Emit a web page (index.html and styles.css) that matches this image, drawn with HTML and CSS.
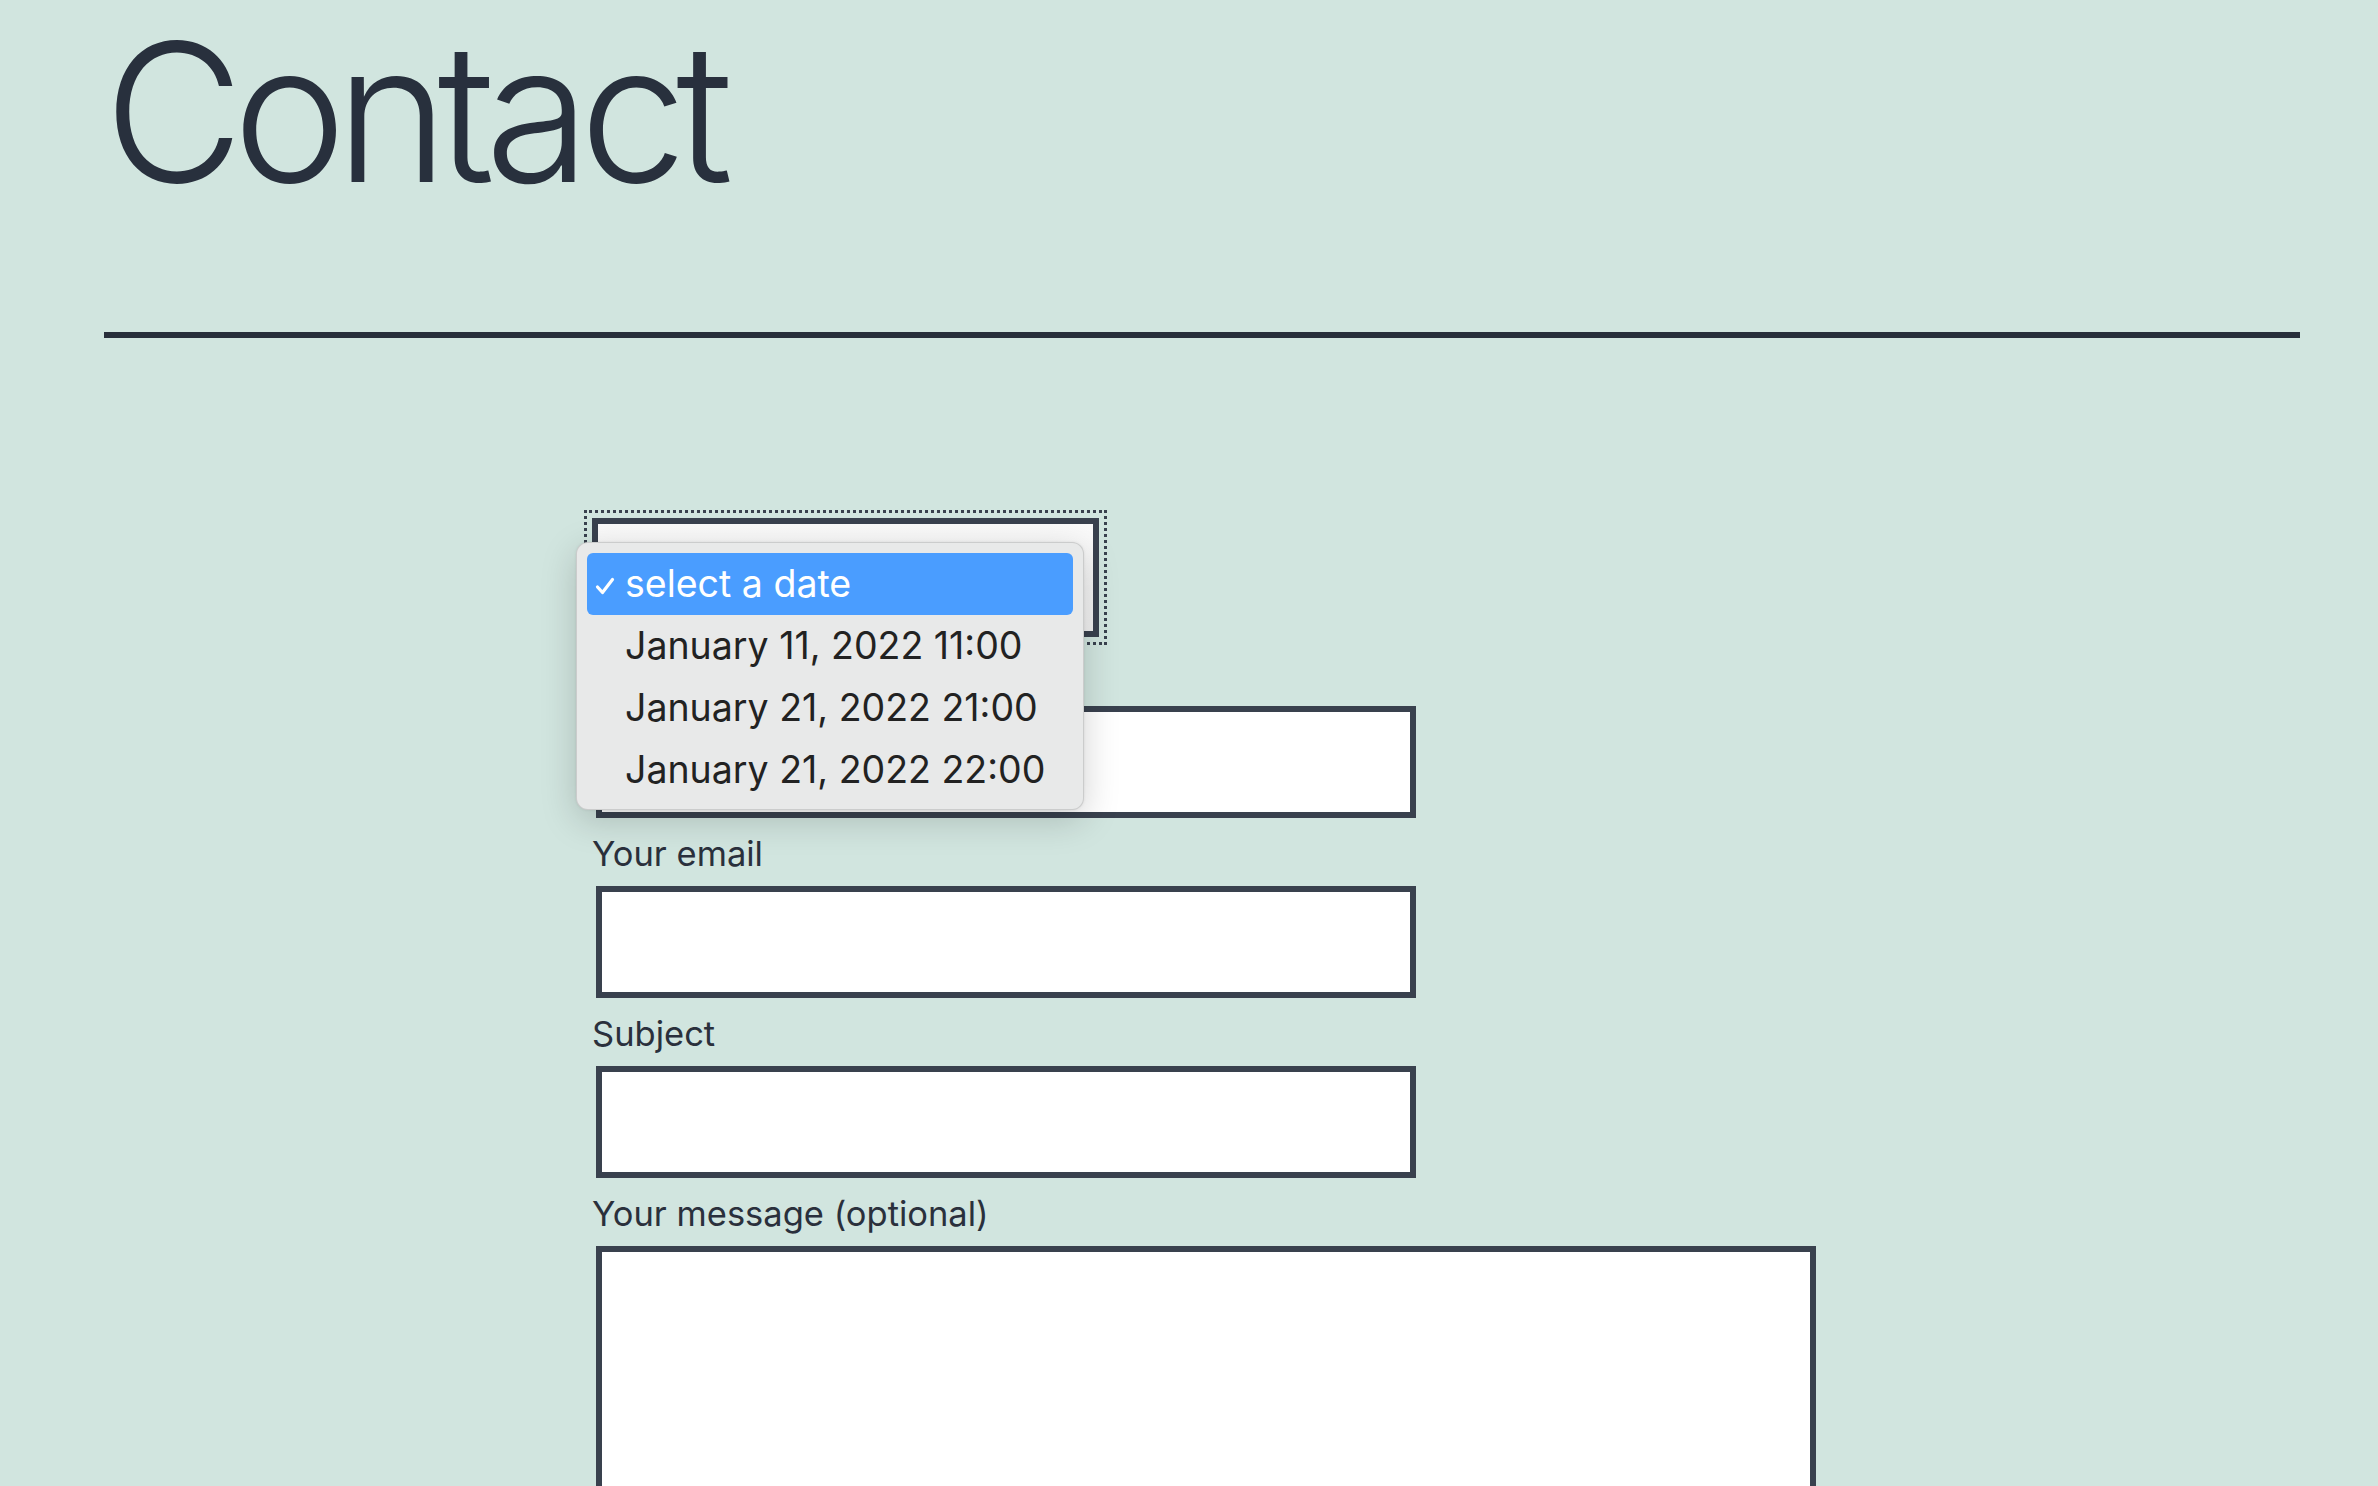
FILE: index.html
```html
<!DOCTYPE html>
<html lang="en">
<head>
<meta charset="utf-8">
<title>Contact</title>
<link rel="stylesheet" href="styles.css">
</head>
<body>
<main class="page">
  <h1 class="title">Contact</h1>
  <hr class="rule">
  <form class="form">
    <div class="select-wrap">
      <select class="date-select">
        <option>select a date</option>
        <option>January 11, 2022 11:00</option>
        <option>January 21, 2022 21:00</option>
        <option>January 21, 2022 22:00</option>
      </select>
      <ul class="menu">
        <li class="menu-item is-active"><svg class="check" viewBox="0 0 20 18" width="20" height="18"><path d="M2.5 10 L7.5 15.5 L17.5 2.5" fill="none" stroke="#fff" stroke-width="3.2" stroke-linecap="round" stroke-linejoin="round"/></svg>select a date</li>
        <li class="menu-item">January 11, 2022 11:00</li>
        <li class="menu-item">January 21, 2022 21:00</li>
        <li class="menu-item">January 21, 2022 22:00</li>
      </ul>
    </div>
    <label class="field-label">Your name</label>
    <input class="field" type="text">
    <label class="field-label">Your email</label>
    <input class="field" type="email">
    <label class="field-label">Subject</label>
    <input class="field" type="text">
    <label class="field-label">Your message (optional)</label>
    <textarea class="field field-area"></textarea>
  </form>
</main>
</body>
</html>
```
FILE: styles.css
```css
html, body {
  margin: 0;
  padding: 0;
}
body {
  background: #d1e5df;
  color: #28303d;
  font-family: Inter, "Noto Sans", sans-serif;
}
.page {
  padding: 0 78px 0 104px;
}
.title {
  margin: 0;
  padding-top: 16px;
  font-size: 192px;
  font-weight: 300;
  line-height: 192px;
  letter-spacing: -11px;
  color: #28303d;
}
.rule {
  margin: 124px 0 0;
  height: 6px;
  border: 0;
  background: #282f3b;
}
.form {
  display: flex;
  flex-direction: column;
  align-items: flex-start;
  margin: 180px 0 0 488px;
}
.select-wrap {
  position: relative;
  margin-bottom: 13px;
}
.date-select {
  display: block;
  width: 507px;
  height: 119px;
  box-sizing: border-box;
  border: 6px solid #39414e;
  border-radius: 0;
  background: linear-gradient(#fafafa, #f0f0f0);
  appearance: none;
  -webkit-appearance: none;
  font: 400 34px Inter, sans-serif;
  color: transparent;
  outline: 3px dotted #39414e;
  outline-offset: 5px;
}
.menu {
  position: absolute;
  left: -16px;
  top: 24px;
  width: 508px;
  height: 268px;
  box-sizing: border-box;
  margin: 0;
  padding: 10px;
  list-style: none;
  background: #e8e9e9;
  border: 1px solid rgba(0, 0, 0, 0.12);
  border-radius: 12px;
  box-shadow: 0 10px 36px rgba(0, 0, 0, 0.18), 0 0 3px rgba(0, 0, 0, 0.08);
}
.menu-item {
  position: relative;
  height: 62px;
  padding-left: 38px;
  font-size: 37.5px;
  line-height: 62px;
  color: #222;
  border-radius: 6px;
}
.menu-item.is-active {
  background: #4a9dff;
  color: #fff;
}
.check {
  position: absolute;
  left: 8px;
  top: 24px;
}
.field-label {
  display: block;
  height: 48px;
  margin-bottom: 8px;
  font-size: 34.5px;
  line-height: 48px;
  color: #2a303c;
}
.field {
  display: block;
  width: 820px;
  height: 112px;
  box-sizing: border-box;
  margin: 0 0 12px 4px;
  border: 6px solid #39414e;
  border-radius: 0;
  background: #fff;
}
.field-area {
  width: 1220px;
  height: 360px;
}
```
